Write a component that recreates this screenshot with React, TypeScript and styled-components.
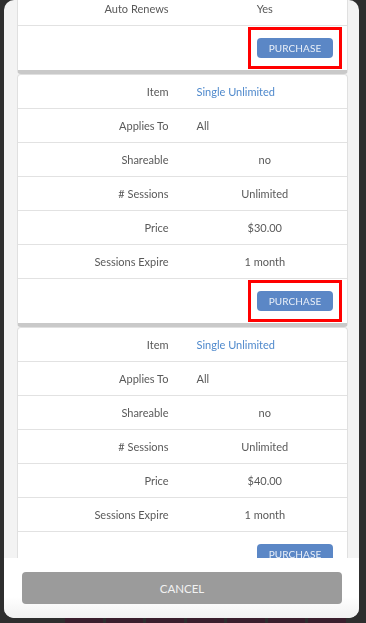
import React, { useLayoutEffect, useRef } from 'react'
import styled, { createGlobalStyle } from 'styled-components'

const GlobalStyle = createGlobalStyle`
  html, body {
    margin: 0;
    padding: 0;
    height: 100%;
    background: #2e2e2e;
    font-family: Lato, 'Open Sans', sans-serif;
    overflow: hidden;
  }
  #root {
    height: 100%;
  }
`

const Page = styled.div`
  height: 100%;
  display: flex;
  flex-direction: column;
  justify-content: flex-end;
  background: #2e2e2e;
`

const CalendarStrip = styled.div`
  display: flex;
  gap: 3px;
  padding: 0 20px 0 65px;
  height: 10px;
`

const CalendarCell = styled.div`
  flex: 1;
  background: #3a1e2d;
`

const Modal = styled.div`
  position: fixed;
  left: 4px;
  right: 7px;
  top: 0;
  bottom: 5px;
  border-radius: 10px;
  background: #f3f3f3;
  display: flex;
  flex-direction: column;
  overflow: hidden;
`

const ModalBody = styled.div`
  position: relative;
  flex: 1;
  overflow-y: auto;
  padding: 0 11px 0 13px;
  scrollbar-width: none;
  &::-webkit-scrollbar {
    display: none;
  }
`

const Card = styled.div`
  background: #fff;
  border: 1px solid #e0e0e0;
  border-bottom: 4px solid #c9c9c9;
  border-radius: 4px;
`

const Row = styled.div`
  display: grid;
  grid-template-columns: 1fr 1fr;
  align-items: center;
  height: 34px;
  box-sizing: border-box;
  border-bottom: 1px solid #e2e2e2;
  font-size: 11px;
  color: #595959;
`

const Label = styled.div`
  text-align: right;
  padding-right: 14px;
`

const Value = styled.div<{ $align: 'left' | 'center' }>`
  text-align: ${({ $align }) => $align};
  padding-left: ${({ $align }) => ($align === 'left' ? '14px' : '0')};
`

const Link = styled.a`
  color: #4f89cc;
  text-decoration: none;
`

const ActionRow = styled.div`
  display: flex;
  align-items: center;
  justify-content: flex-end;
  height: 44px;
  padding-right: 5px;
`

const Highlight = styled.div<{ $on: boolean }>`
  border: 3px solid ${({ $on }) => ($on ? '#ff0000' : 'transparent')};
  padding: 8px 6px 8px 6px;
`

const PurchaseButton = styled.button`
  display: block;
  width: 76px;
  height: 20px;
  padding: 0;
  border: none;
  border-radius: 4px;
  background: #5b87c6;
  color: #e9eff8;
  font-family: Lato, 'Open Sans', sans-serif;
  font-size: 10px;
  letter-spacing: 0.1px;
  text-transform: uppercase;
`

const Footer = styled.div`
  padding: 14px 17px 14px 18px;
  background: linear-gradient(#ffffff, #ffffff 65%, #f1f1f1);
`

const CancelButton = styled.button`
  display: block;
  width: 100%;
  height: 32px;
  border: none;
  border-radius: 4px;
  background: #9b9b9b;
  color: #f2f2f2;
  font-family: Lato, 'Open Sans', sans-serif;
  font-size: 11.5px;
  text-transform: uppercase;
`

type Pass = {
  item: string
  price: string
  autoRenews?: string
  highlight: boolean
}

const passes: Pass[] = [
  { item: 'Monthly Unlimited', price: '$25.00', autoRenews: 'Yes', highlight: true },
  { item: 'Single Unlimited', price: '$30.00', highlight: true },
  { item: 'Single Unlimited', price: '$40.00', highlight: false },
]

function PassCard({ pass, anchorRef }: { pass: Pass; anchorRef?: React.Ref<HTMLDivElement> }) {
  return (
    <Card>
      <Row>
        <Label>Item</Label>
        <Value $align="left">
          <Link href="#">{pass.item}</Link>
        </Value>
      </Row>
      <Row>
        <Label>Applies To</Label>
        <Value $align="left">All</Value>
      </Row>
      <Row>
        <Label>Shareable</Label>
        <Value $align="center">no</Value>
      </Row>
      <Row>
        <Label># Sessions</Label>
        <Value $align="center">Unlimited</Value>
      </Row>
      <Row>
        <Label>Price</Label>
        <Value $align="center">{pass.price}</Value>
      </Row>
      <Row>
        <Label>Sessions Expire</Label>
        <Value $align="center">1 month</Value>
      </Row>
      {pass.autoRenews && (
        <Row ref={anchorRef}>
          <Label>Auto Renews</Label>
          <Value $align="center">{pass.autoRenews}</Value>
        </Row>
      )}
      <ActionRow>
        <Highlight $on={pass.highlight}>
          <PurchaseButton>Purchase</PurchaseButton>
        </Highlight>
      </ActionRow>
    </Card>
  )
}

export default function App() {
  const bodyRef = useRef<HTMLDivElement>(null)
  const anchorRef = useRef<HTMLDivElement>(null)

  // the list is shown scrolled down so the first pass is mostly out of view
  useLayoutEffect(() => {
    if (bodyRef.current && anchorRef.current) {
      bodyRef.current.scrollTop = anchorRef.current.offsetTop + 8
    }
  }, [])

  return (
    <>
      <GlobalStyle />
      <Page>
        <CalendarStrip>
          {Array.from({ length: 7 }).map((_, i) => (
            <CalendarCell key={i} />
          ))}
        </CalendarStrip>
      </Page>
      <Modal>
        <ModalBody ref={bodyRef}>
          {passes.map((p, i) => (
            <PassCard key={i} pass={p} anchorRef={i === 0 ? anchorRef : undefined} />
          ))}
        </ModalBody>
        <Footer>
          <CancelButton>Cancel</CancelButton>
        </Footer>
      </Modal>
    </>
  )
}
